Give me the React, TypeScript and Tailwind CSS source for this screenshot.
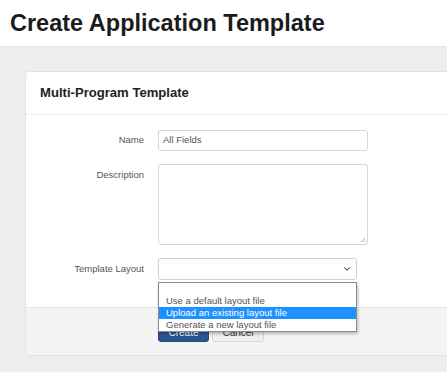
import { ChevronDown } from 'lucide-react';

const font = { fontFamily: '"Liberation Sans", Arial, sans-serif' };

const options = ['', 'Use a default layout file', 'Upload an existing layout file', 'Generate a new layout file'];

export default function App() {
  return (
    <div className="min-h-screen bg-[#eeeeee] text-[#333]" style={font}>
      <header className="h-[47px] bg-white border-b border-[#e3e3e3] flex items-center px-[10px] pt-[2px]">
        <h1 className="text-[23.5px] font-bold text-[#1b1b1b] leading-none">Create Application Template</h1>
      </header>

      <main className="pl-[25px] pt-[24px]">
        <div className="bg-white rounded-l-[4px] border border-r-0 border-[#e2e2e2] relative">
          <div className="h-[43px] px-[14px] flex items-center border-b border-[#ececec]">
            <h2 className="text-[13.1px] font-bold text-[#222]">Multi-Program Template</h2>
          </div>

          <div className="pt-[15px] pb-[27px] flex flex-col gap-[13px] text-[9.5px]">
            <div className="flex items-center">
              <label className="w-[118px] text-right text-[#555]">Name</label>
              <div className="ml-[14px] w-[210px] h-[21px] border border-[#d6d6d6] rounded-[3px] flex items-center px-[4px] text-[#555]">
                All Fields
              </div>
            </div>

            <div className="flex items-start">
              <label className="w-[118px] text-right text-[#555] pt-[4px]">Description</label>
              <div className="ml-[14px] w-[210px] h-[81px] border border-[#d6d6d6] rounded-[3px] relative">
                <svg className="absolute right-[1px] bottom-[1px]" width="6" height="6" viewBox="0 0 6 6">
                  <path d="M5 1L1 5M5 3.5L3.5 5" stroke="#999" strokeWidth="0.8" />
                </svg>
              </div>
            </div>

            <div className="flex items-center">
              <label className="w-[118px] text-right text-[#555]">Template Layout</label>
              <div className="ml-[14px] w-[199px] h-[22px] border border-[#d0d0d0] rounded-[3px] flex items-center justify-end pr-[4px]">
                <ChevronDown className="w-[10px] h-[10px] text-[#444]" strokeWidth={2.5} />
              </div>
            </div>
          </div>

          <div className="bg-[#f4f4f4] border-t border-[#e6e6e6] rounded-bl-[4px] h-[48px] pt-[12px] flex gap-[3px] pl-[132px] text-[10px]">
            <button className="w-[51px] h-[22px] pt-[3px] bg-[#2a5592] border border-[#234a82] text-white rounded-[3px]">Create</button>
            <button className="w-[52px] h-[22px] pt-[3px] bg-[#efefef] border border-[#d6d6d6] text-[#333] rounded-[3px]">Cancel</button>
          </div>

          <ul className="absolute left-[132px] top-[210px] w-[199px] bg-white border border-[#8a8a8a] shadow-[1px_2px_3px_rgba(0,0,0,0.25)] text-[9.5px] text-[#555]">
            {options.map((o, i) => (
              <li key={i} className={`h-[12px] leading-[12px] px-[7px] ${i === 2 ? 'bg-[#1e90ff] text-white' : ''}`}>
                {o}
              </li>
            ))}
          </ul>
        </div>
      </main>
    </div>
  );
}
